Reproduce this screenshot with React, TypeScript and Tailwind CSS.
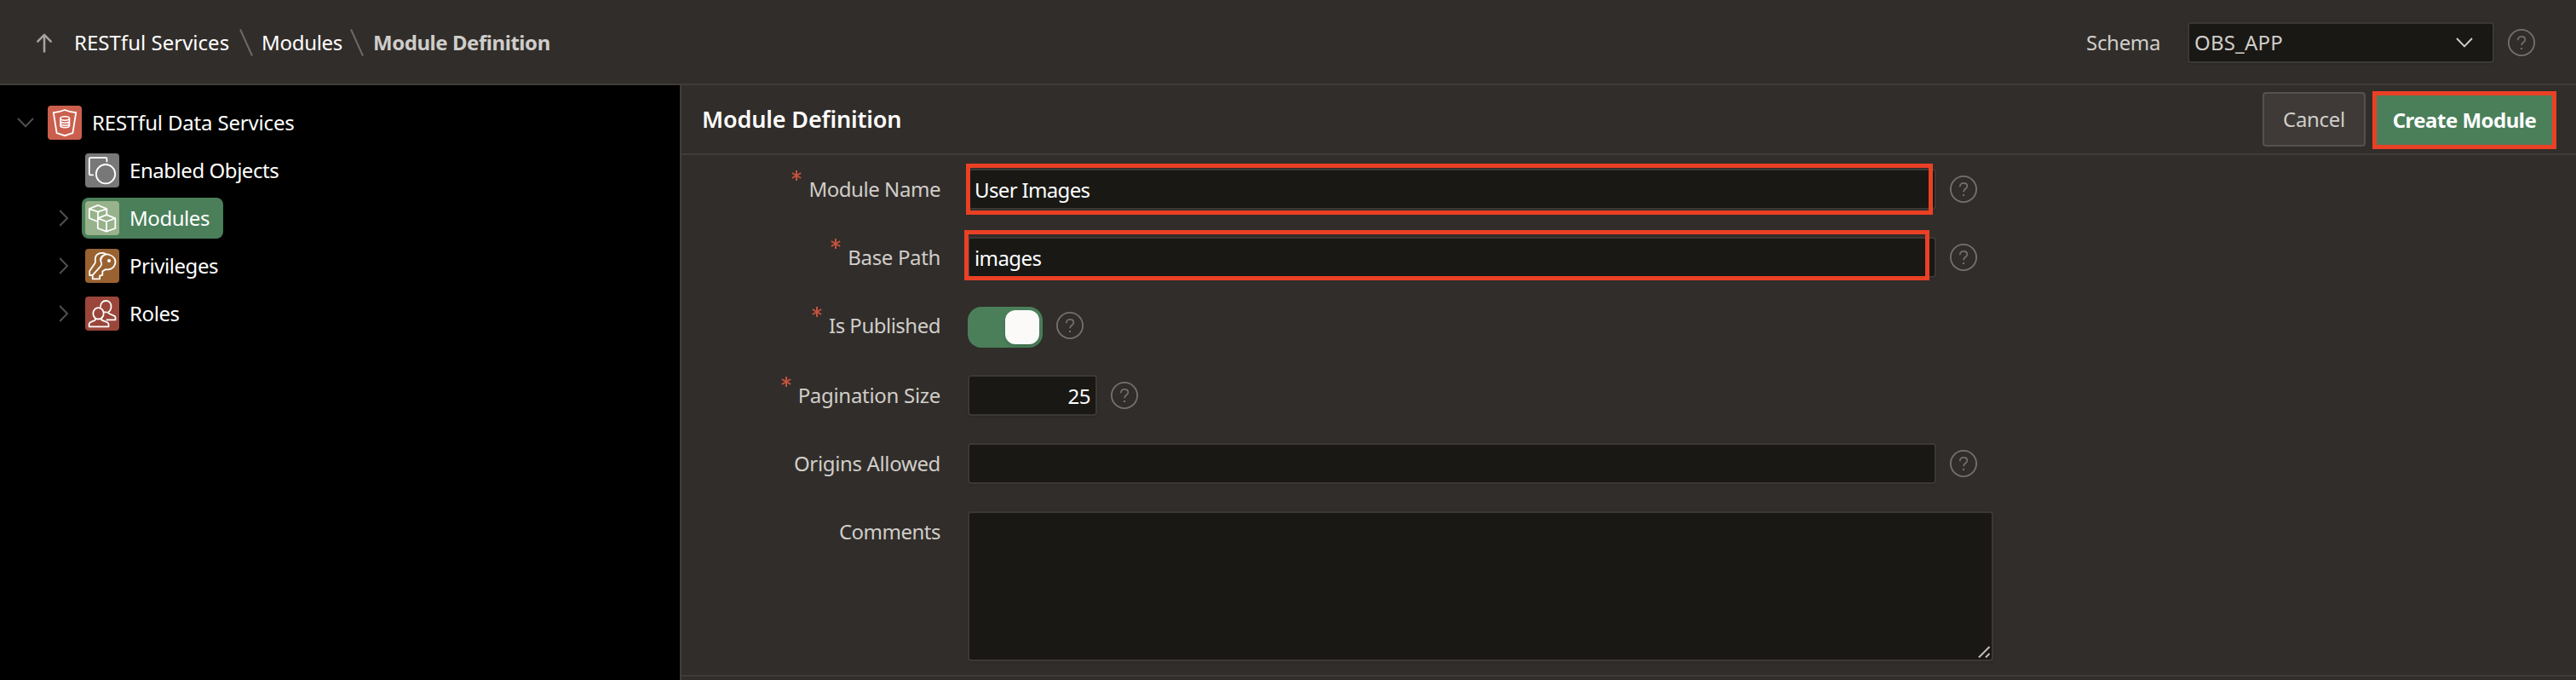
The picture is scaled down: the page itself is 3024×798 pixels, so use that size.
import type { ReactNode } from "react";

function Help({ className = "" }: { className?: string }) {
  return (
    <svg className={"h-8 w-8 shrink-0 text-[#75716d] " + className} viewBox="0 0 32 32" fill="none" stroke="currentColor">
      <circle cx="16" cy="16" r="15.1" strokeWidth="1.8" />
      <path d="M11.8 13.2V12.6a4.1 4.1 0 0 1 4.2-3.8c2.5 0 4.3 1.5 4.3 3.6 0 3.1-4.2 3.2-4.2 6.8" strokeWidth="1.7" />
      <path d="M15 22h2v2h-2z" fill="currentColor" stroke="none" />
    </svg>
  );
}

function TreeIcon({ className, children }: { className: string; children: ReactNode }) {
  return (
    <svg
      className={"h-10 w-10 shrink-0 rounded " + className}
      viewBox="0 0 40 40"
      fill="none"
      stroke="white"
      strokeWidth="1.8"
      strokeLinejoin="round"
    >
      {children}
    </svg>
  );
}

function ChevronRight() {
  return (
    <svg className="h-5 w-3 shrink-0" viewBox="0 0 12 20" fill="none" stroke="#4f4f4f" strokeWidth="2">
      <path d="M1.2 1l8.8 9-8.8 9" />
    </svg>
  );
}

function Slash({ className }: { className: string }) {
  return (
    <svg className={"h-8 w-4 shrink-0 " + className} viewBox="0 0 16 32" stroke="#6d6965" strokeWidth="2">
      <path d="M1 0.5l14 31" />
    </svg>
  );
}

function Header() {
  return (
    <header className="flex h-[100px] shrink-0 items-center border-b-2 border-[#403d39] pt-0.5 pl-[42px]">
      <svg className="h-6 w-5 shrink-0" viewBox="0 0 20 24" fill="none" stroke="#a5a29f" strokeWidth="2.6" strokeLinecap="round" strokeLinejoin="round">
        <path d="M10 22.5V3M2.3 10.6L10 2.9l7.7 7.7" />
      </svg>
      <span className="ml-[25px] w-[182px] tracking-[0.02px] text-white">RESTful Services</span>
      <Slash className="ml-3" />
      <span className="ml-2.5 w-[94px] tracking-[-0.3px] text-white">Modules</span>
      <Slash className="ml-2.5" />
      <span className="ml-[11px] font-bold tracking-[-0.45px] text-[#cfcdca]">Module Definition</span>
      <div className="ml-auto flex items-center pr-12">
        <span className="w-[119px] tracking-[-0.3px]">Schema</span>
        <div className="flex h-12 w-[360px] items-center justify-between rounded border-2 border-[#3c3935] bg-[#191815] pr-[23px] pl-1.5 shadow-sm">
          <span className="tracking-[0.2px]">OBS_APP</span>
          <svg className="h-3 w-5" viewBox="0 0 20 12" fill="none" stroke="#d0cdca" strokeWidth="1.9">
            <path d="M1 1l9 9.4L19 1" />
          </svg>
        </div>
        <Help className="ml-4" />
      </div>
    </header>
  );
}

function Sidebar() {
  return (
    <aside className="flex w-[798px] shrink-0 flex-col bg-black pt-5 text-white">
      <div className="flex h-12 items-center pl-5">
        <svg className="h-3 w-5" viewBox="0 0 20 12" fill="none" stroke="#4f4f4f" strokeWidth="2">
          <path d="M1 1l9 9.2L19 1" />
        </svg>
        <TreeIcon className="ml-4 bg-[#cb5f4e]">
          <path d="M6.8 8.2Q14 7.6 20 5q6 2.6 13.2 3.2L29.4 32 20 35.2 10.6 32z" strokeLinejoin="miter" />
          <ellipse cx="20.2" cy="15" rx="5.3" ry="2.2" strokeWidth="1.6" />
          <path d="M14.9 15v8.5c0 3 10.6 3 10.6 0V15M14.9 18c0 2.9 10.6 2.9 10.6 0M14.9 21c0 2.9 10.6 2.9 10.6 0" strokeWidth="1.6" />
        </TreeIcon>
        <span className="ml-3 tracking-[-0.17px]">RESTful Data Services</span>
      </div>

      <div className="mt-2 flex h-12 items-center pl-[100px]">
        <TreeIcon className="bg-[#787878]">
          <path d="M25.4 10.3V6.4q0-1.2-1.2-1.2H6.1q-1.3 0-1.3 1.3v17.6q0 1.3 1.3 1.3h3.8" />
          <circle cx="24" cy="24.2" r="11.2" />
        </TreeIcon>
        <span className="ml-3 tracking-[-0.45px]">Enabled Objects</span>
      </div>

      <div className="mt-2 flex h-12 items-center pl-[69px]">
        <ChevronRight />
        <div className="ml-[15px] flex h-12 w-[166px] items-center rounded-lg bg-[#4a7f5a] pl-1">
          <TreeIcon className="bg-[#98b28b]">
            <path d="M4.8 9L15 4.9 25.3 9 15 12.7zM4.8 9v11l9.7 4M15 12.7V20M25.3 9v7" />
            <path d="M14.8 20.2L25 16.2l10.3 4L25 24zM14.8 20.2V32L25 35.6 35.3 32V20.2M25 24v11.6" />
          </TreeIcon>
          <span className="ml-3 tracking-[-0.45px]">Modules</span>
        </div>
      </div>

      <div className="mt-2 flex h-12 items-center pl-[69px]">
        <ChevronRight />
        <TreeIcon className="ml-[19px] bg-[#9a6231]">
          <path d="M24.5 6.2C20 3.6 14 5.2 12.3 9.2c-1.2 3 .3 5.6-.9 7.8L5.2 26v5h3.2" />
          <path d="M19.3 17.6c-3.5-7 3.6-12.8 9.3-10.6 5.3 1.6 8.2 6.7 6.3 11.4-1.7 4.7-6.3 6.6-11.2 5.8l-3.4 2.2v4.4l-3.2.9v3.6H8.7v-4.4l8.6-9.6c1.2-1.6 2.1-2.4 2-3.700z" />
          <path d="M22.5 6.8c-3.4 1.3-5 3.6-4.700 7" strokeWidth="1.4" />
          <circle cx="28" cy="14" r="2" fill="white" stroke="none" />
        </TreeIcon>
        <span className="ml-3 tracking-[-0.45px]">Privileges</span>
      </div>

      <div className="mt-2 flex h-12 items-center pl-[69px]">
        <ChevronRight />
        <TreeIcon className="ml-[19px] bg-[#9a463b]">
          <path d="M18 12.4C18 7.8 20.4 5 24.2 5s6.3 2.8 6.3 6.7c0 3.3-1.7 5.5-3.7 7.1 1.5 2.8 8.7 2.5 8.7 5.8v2.8H24.6M22.3 18.2l3.4.4" />
          <ellipse cx="15.5" cy="19.8" rx="6.2" ry="6.7" />
          <path d="M11.8 25.4v2.2c-2 1.6-7.2 1.5-7.2 5v2.7h22.9v-2.7c0-3.5-6-3.4-8.2-5v-2.2" />
        </TreeIcon>
        <span className="ml-3 tracking-[-0.4px]">Roles</span>
      </div>
    </aside>
  );
}

function Row({ label, spacing, required = false, children }: { label: string; spacing: string; required?: boolean; children: ReactNode }) {
  return (
    <div className="flex items-start">
      <div className="flex w-[304px] shrink-0 items-start justify-end leading-[48px]">
        {required && (
          <svg className="mt-0.5 mr-2 h-3 w-3" viewBox="0 0 12 12" stroke="#c4533f" strokeWidth="2">
            <path d="M6 0v12M0.8 3l10.4 6M11.2 3L0.8 9" />
          </svg>
        )}
        <span className={spacing}>{label}</span>
      </div>
      <div className="ml-8 flex">{children}</div>
    </div>
  );
}

const field = "h-12 rounded border-2 border-[#3c3935] bg-[#191815] leading-[46px] text-white shadow-sm";

export default function App() {
  return (
    <div className="flex h-[798px] w-[3024px] flex-col overflow-hidden bg-[#312d2a] font-['Noto_Sans',sans-serif] text-[24px] leading-[48px] whitespace-nowrap text-[#d0cdc9]">
      <Header />
      <div className="flex min-h-0 flex-1">
        <Sidebar />
        <main className="flex flex-1 flex-col border-l-2 border-[#403d39]">
          <div className="flex h-[82px] shrink-0 items-start border-b-2 border-[#403d39] pr-[23px] pl-6">
            <h1 className="pt-4 text-[27px] font-semibold tracking-[-0.15px] text-white">Module Definition</h1>
            <button className="mt-2 ml-auto h-16 w-[121px] rounded border-2 border-[#55514c] bg-[#3f3a37] tracking-[-0.3px]">Cancel</button>
            <button className="mt-[7px] ml-2 h-[68px] w-[216px] border-5 border-[#ea4025] bg-[#4a7f5a] font-bold tracking-[-0.5px] text-white">
              Create Module
            </button>
          </div>

          <div className="flex flex-col gap-8 pt-4">
            <Row label="Module Name" spacing="tracking-[-0.45px]" required>
              <div className={"relative w-[1137px] pl-1.5 tracking-[-0.65px] " + field}>
                User Images
                <div className="absolute -top-2 -left-1 h-[60px] w-[1135px] border-5 border-[#ea4025]" />
              </div>
              <Help className="mt-2 ml-4" />
            </Row>
            <Row label="Base Path" spacing="tracking-[-0.35px]" required>
              <div className={"relative w-[1137px] pl-1.5 tracking-[-0.6px] " + field}>
                images
                <div className="absolute -top-2.5 -left-1.5 h-[59px] w-[1133px] border-5 border-[#ea4025]" />
              </div>
              <Help className="mt-2 ml-4" />
            </Row>
            <Row label="Is Published" spacing="tracking-[-0.5px]" required>
              <div className="mt-0.5 flex h-12 w-[88px] items-center justify-end rounded-2xl bg-[#4a7f5a] pr-1">
                <div className="h-10 w-10 rounded-xl bg-[#fbfaf9] shadow-md" />
              </div>
              <Help className="mt-2 ml-4" />
            </Row>
            <Row label="Pagination Size" spacing="tracking-[-0.3px]" required>
              <div className={"w-[152px] pr-1.5 text-right tracking-[-0.5px] " + field}>25</div>
              <Help className="mt-2 ml-4" />
            </Row>
            <Row label="Origins Allowed" spacing="tracking-[-0.35px]">
              <div className={"w-[1137px] " + field} />
              <Help className="mt-2 ml-4" />
            </Row>
            <Row label="Comments" spacing="tracking-[-0.5px]">
              <div className="relative h-44 w-[1204px] rounded border-2 border-[#3c3935] bg-[#191815] shadow-sm">
                <svg className="absolute right-0.5 bottom-0.5 h-4 w-4" viewBox="0 0 16 16" stroke="#c2c0be" strokeWidth="2">
                  <path d="M3 15.5L15.5 3M11 15.5l4.5-4.5" />
                </svg>
              </div>
            </Row>
          </div>
          <div className="mt-4 h-0.5 shrink-0 bg-[#403d39]" />
        </main>
      </div>
    </div>
  );
}
